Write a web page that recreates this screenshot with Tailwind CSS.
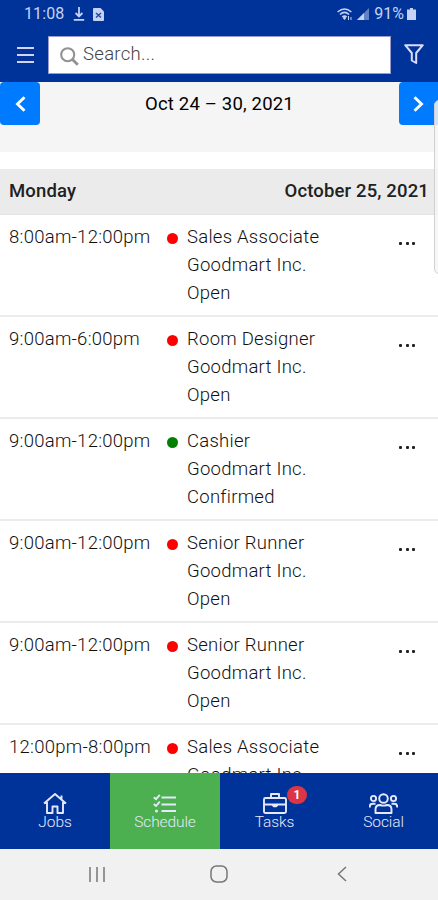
<!DOCTYPE html>
<html lang="en">
  <head>
    <meta charset="UTF-8" />
    <meta name="viewport" content="width=device-width, initial-scale=1.0" />
    <title>Schedule</title>
    <script src="https://cdn.jsdelivr.net/npm/@tailwindcss/browser@4"></script>
    <script>
      const shifts = [
        { time: "8:00am-12:00pm", title: "Sales Associate", status: "Open" },
        { time: "9:00am-6:00pm", title: "Room Designer", status: "Open" },
        { time: "9:00am-12:00pm", title: "Cashier", status: "Confirmed" },
        { time: "9:00am-12:00pm", title: "Senior Runner", status: "Open" },
        { time: "9:00am-12:00pm", title: "Senior Runner", status: "Open" },
        { time: "12:00pm-8:00pm", title: "Sales Associate", status: "Open" },
      ];
      const row = ({ time, title, status }) => `
        <li class="flex h-[102px] shrink-0 border-b-2 border-[#ebebeb] pt-2 pl-[9px]">
          <div class="w-[158px] whitespace-nowrap">${time}</div>
          <div class="mt-[10px] mr-[9px] size-[11px] rounded-full ${
            status === "Confirmed" ? "bg-[#008000]" : "bg-[#ff0000]"
          }"></div>
          <div class="flex-1">
            <div>${title}</div>
            <div>Goodmart Inc.</div>
            <div>${status}</div>
          </div>
          <button class="mt-[19px] mr-[23px] flex h-[3px] w-4 justify-between" aria-label="More">
            <span class="size-[3px] rounded-[1px] bg-[#222]"></span>
            <span class="size-[3px] rounded-[1px] bg-[#222]"></span>
            <span class="size-[3px] rounded-[1px] bg-[#222]"></span>
          </button>
        </li>`;
      window.addEventListener("load", () => {
        document.getElementById("shifts").innerHTML = shifts.map(row).join("");
      });
    </script>
  </head>

  <body class="bg-white">
    <div
      class="relative flex h-[900px] w-[438px] flex-col overflow-hidden bg-white font-[Roboto,sans-serif] text-[#212121]"
    >
      <header class="h-[82px] shrink-0 bg-[#003399]">
        <div class="flex h-7 items-center pr-[22px] pl-6 text-[#c5d2f3]">
          <span class="text-base leading-7 tracking-[0.1px]">11:08</span>
          <svg class="ml-[9px] h-[14px] w-3" viewBox="0 0 12 14" fill="none" stroke="currentColor" stroke-width="1.8">
            <path d="M6 0v9M2.6 6 6 9.4 9.4 6M.8 12.8h10.4" />
          </svg>
          <svg class="ml-[8px] h-[13px] w-[11px]" viewBox="0 0 11 13">
            <path d="M1 0h6.5L11 3.5V12a1 1 0 0 1-1 1H1a1 1 0 0 1-1-1V1a1 1 0 0 1 1-1z" fill="currentColor" />
            <path d="M3 5l5 4.5M8 5 3 9.5" fill="none" stroke="#244b9f" stroke-width="1.500" />
          </svg>
          <svg class="ml-auto h-3 w-4" viewBox="0 0 16 12" fill="none" stroke="currentColor" stroke-width="1.5">
            <path d="M.6 4Q7.500-2 14.400 4M3 6.500Q7.500 2.300 12 6.500M5.300 8.800Q7.500 7 9.700 8.800" />
            <path d="M7.500 8 9.300 10 7.500 12 5.700 10z" fill="currentColor" stroke="none" />
            <path d="M11.500 8v4M14 9v3" stroke-width="1" />
          </svg>
          <svg class="ml-[4px] h-3 w-3" viewBox="0 0 12 12" fill="currentColor">
            <path d="M0 12 12 0v12z" opacity=".5" />
            <path d="M0 12 7 5v7z" />
          </svg>
          <span class="ml-[5px] text-base leading-7">91%</span>
          <svg class="ml-[3px] h-3 w-[9px]" viewBox="0 0 9 12" fill="currentColor">
            <path d="M3 0h3v1.500h3V12H0V1.500h3z" />
          </svg>
        </div>
        <div class="flex items-center pt-2">
          <button class="ml-[17px] flex h-4 w-[17px] flex-col justify-between" aria-label="Menu">
            <span class="h-0.5 bg-[#d4d4f0]"></span>
            <span class="h-0.5 bg-[#d4d4f0]"></span>
            <span class="h-0.5 bg-[#d4d4f0]"></span>
          </button>
          <div class="ml-[14px] flex h-[38px] w-[343px] items-center border border-[#9a9bd0] bg-white pl-[11px]">
            <svg class="mt-[3px] size-[19px]" viewBox="0 0 19 19" fill="none" stroke="#929292" stroke-width="2.100">
              <circle cx="7.700" cy="7.700" r="6.500" />
              <path d="m12.500 12.500 5.300 5.300" stroke-width="2.800" />
            </svg>
            <span class="ml-[4px] text-[18.500px] font-light tracking-[0.300px] text-[#444]">Search...</span>
          </div>
          <svg class="mb-[3px] ml-[13px] h-5 w-5" viewBox="0 0 20 20" fill="none" stroke="#dddcfa" stroke-width="2" stroke-linejoin="round">
            <path d="M1.200 1.200h17.600L12.200 9v10L7.800 16.500V9z" />
          </svg>
        </div>
      </header>

      <section class="flex h-[70px] shrink-0 items-start justify-between bg-[#f5f5f5]">
        <button class="flex h-[43px] w-10 items-center justify-center rounded-[4px] bg-[#007bff]" aria-label="Previous week">
          <svg class="h-4 w-[11px]" viewBox="0 0 11 16" fill="none" stroke="#fff" stroke-width="2.900">
            <path d="M9.500 1.200 2.500 8l7 6.800" />
          </svg>
        </button>
        <h1 class="pt-2 text-[18.500px] leading-7 tracking-[0.180px] text-black">Oct 24 – 30, 2021</h1>
        <button class="flex h-[43px] w-[39px] items-center justify-center rounded-l-[4px] bg-[#007bff]" aria-label="Next week">
          <svg class="h-4 w-[11px]" viewBox="0 0 11 16" fill="none" stroke="#fff" stroke-width="2.900">
            <path d="M1.500 1.200 8.500 8l-7 6.800" />
          </svg>
        </button>
      </section>

      <main class="flex min-h-0 flex-1 flex-col overflow-hidden pt-[17px]">
        <h2 class="flex h-[46px] shrink-0 items-center justify-between border-b border-[#e4e4e4] bg-[#ebebeb] pr-[9px] pl-[9px] text-[18.500px] font-medium tracking-[0.150px]">
          <span>Monday</span>
          <span>October 25, 2021</span>
        </h2>
        <ul id="shifts" class="flex flex-col text-[18.500px] leading-7 font-light tracking-[0.260px] text-[#111]"></ul>
      </main>

      <nav class="grid h-[76px] shrink-0 grid-cols-[110px_110px_109px_109px] bg-[#003399] text-[15.500px] leading-4 font-light tracking-[-0.100px] text-[#e6e9fb]">
        <a class="flex flex-col items-center pt-5">
          <svg class="h-[21px] w-6" viewBox="0 0 24 21" fill="none" stroke="currentColor" stroke-width="1.900" stroke-linejoin="round">
            <path d="M1 10.500 12 1l11 9.500M4 9v11h5.500v-6.500h5V20H20V9M18.500 6V2.500" />
          </svg>
          <span>Jobs</span>
        </a>
        <a class="flex flex-col items-center bg-[#4caf50] pt-5">
          <svg class="h-[21px] w-6" viewBox="0 0 24 21" fill="none" stroke="currentColor" stroke-width="2">
            <path d="M8.500 4.500H23M8.500 11.500H23M8.500 18H23" />
            <path d="M.8 4.200 3 6.200 6.800 1.800M.8 11 3 13 6.800 8.600" stroke-width="1.900" />
            <circle cx="3.500" cy="18" r="1.500" fill="currentColor" stroke="none" />
          </svg>
          <span>Schedule</span>
        </a>
        <a class="relative flex flex-col items-center pt-5">
          <svg class="h-[21px] w-6" viewBox="0 0 24 21" fill="none" stroke="currentColor" stroke-width="1.900" stroke-linejoin="round">
            <rect x="1" y="5" width="22" height="15" rx="1.500" />
            <path d="M8 5V1h8v4M1 11.500h22" />
            <path d="M9 11.500h6v1.200l-1.500 1.600h-3L9 12.700z" fill="currentColor" stroke="none" />
          </svg>
          <span>Tasks</span>
          <span class="absolute top-[13px] left-[67px] flex h-[18px] w-5 items-center justify-center rounded-full bg-[#dc3545] text-xs font-bold text-white">1</span>
        </a>
        <a class="flex flex-col items-center pt-5">
          <svg class="h-[21px] w-[29px]" viewBox="0 0 29 21" fill="none" stroke="currentColor" stroke-width="1.900">
            <circle cx="14.500" cy="5.500" r="4.300" />
            <circle cx="4.500" cy="5.500" r="2.600" />
            <circle cx="24.500" cy="5.500" r="2.600" />
            <path d="M6.500 20v-3.500q0-4.500 4.500-4.500 3.500 1.300 7 0 4.500 0 4.500 4.500V20zM.8 14.500v-1q0-2.700 3-2.700h2.700M28.200 14.500v-1q0-2.700-3-2.700h-2.700" stroke-linejoin="round" />
          </svg>
          <span>Social</span>
        </a>
      </nav>

      <footer class="flex h-[51px] shrink-0 items-center bg-[#f1f1f1] pb-px pl-[89px] text-[#777]">
        <svg class="h-[17px] w-4" viewBox="0 0 16 17" stroke="currentColor" stroke-width="1.500">
          <path d="M1 1v15M8 1v15M15 1v15" />
        </svg>
        <svg class="ml-[105px] size-[18px]" viewBox="0 0 18 18" fill="none" stroke="currentColor" stroke-width="1.500">
          <rect x="1" y="1" width="16" height="16" rx="5.500" />
        </svg>
        <svg class="ml-[109px] h-4 w-[10px]" viewBox="0 0 10 16" fill="none" stroke="currentColor" stroke-width="1.500">
          <path d="M9 1 1.500 8 9 15" />
        </svg>
      </footer>

      <!-- edge panel handle -->
      <div class="absolute top-[100px] -right-[6px] h-[174px] w-[10px] rounded-[5px] border border-[#d0d0d0] bg-[#f6f6f6]/85"></div>
    </div>
  </body>
</html>
